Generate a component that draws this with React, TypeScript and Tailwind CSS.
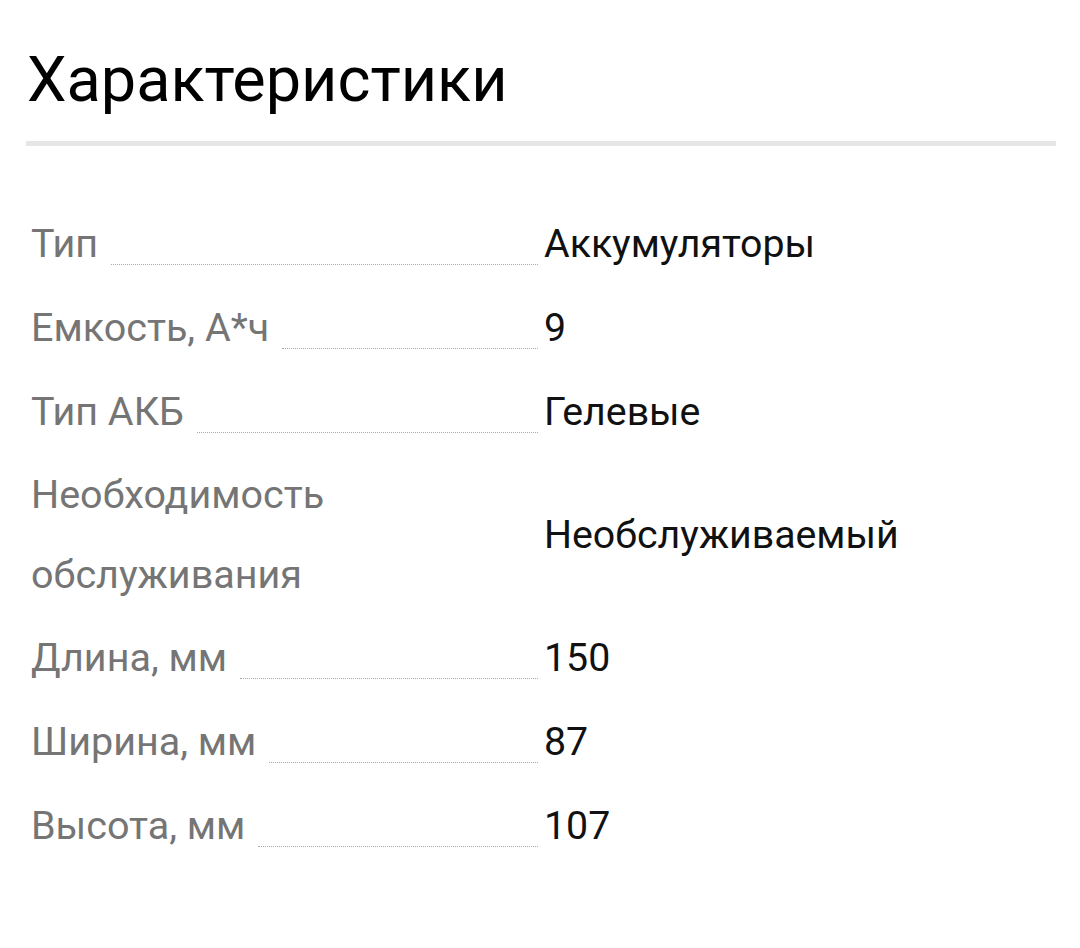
import React from "react";

const rows: { label: string; value: string; multi?: boolean }[] = [
  { label: "Тип", value: "Аккумуляторы" },
  { label: "Емкость, А*ч", value: "9" },
  { label: "Тип АКБ", value: "Гелевые" },
  { label: "Необходимость обслуживания", value: "Необслуживаемый", multi: true },
  { label: "Длина, мм", value: "150" },
  { label: "Ширина, мм", value: "87" },
  { label: "Высота, мм", value: "107" },
];

export default function App() {
  return (
    <div className="w-[1080px] h-[948px] bg-white pl-[26px] pr-[24px] pt-[40px]" style={{ fontFamily: "Roboto, 'Noto Sans', sans-serif" }}>
      <h1 className="text-[63px] leading-[80px] text-black font-normal pl-[1px]">Характеристики</h1>
      <div className="mt-[21px] h-[5px] bg-[#e6e6e6]" />
      <div className="mt-[56px] pl-[5px]">
        {rows.map((r) => (
          <div key={r.label} className={`grid grid-cols-[507px_1fr] gap-x-[6px] ${r.multi ? "py-[1px]" : "py-[2px]"}`}>
            <div className="flex items-end text-[39.5px] leading-[80px] text-[#757575]">
              {r.multi ? (
                <span className="w-[300px]">{r.label}</span>
              ) : (
                <>
                  <span className="whitespace-nowrap">{r.label}</span>
                  <span className="flex-1 ml-[13px] mb-[19px] border-b border-dotted border-[#a8a8a8]" />
                </>
              )}
            </div>
            <div className="flex items-center text-[39.3px] leading-[80px] text-[#111]">{r.value}</div>
          </div>
        ))}
      </div>
    </div>
  );
}
